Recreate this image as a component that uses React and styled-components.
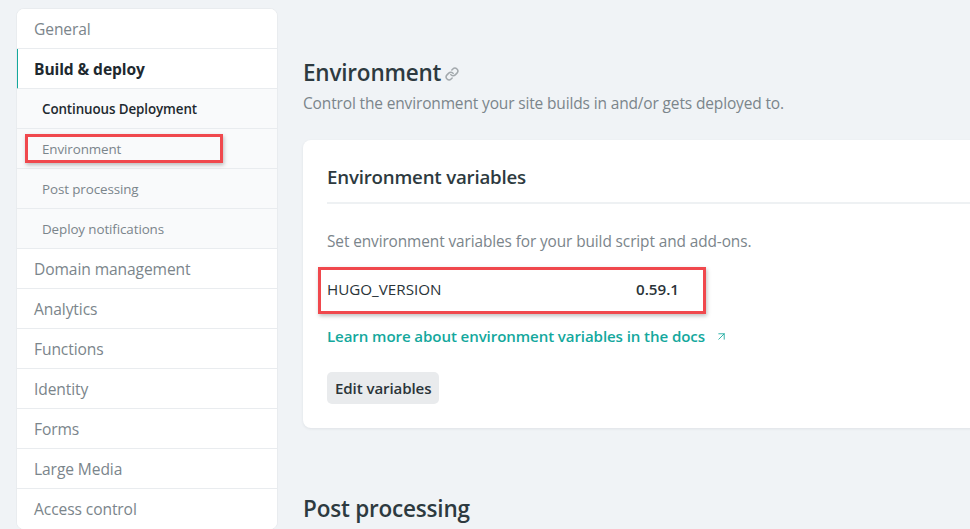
import React from 'react'
import styled, { createGlobalStyle } from 'styled-components'
import { Link as LinkIcon, ArrowUpRight } from 'lucide-react'

const colors = {
  page: '#f0f3f6',
  border: '#e9ecef',
  text: '#2d3a40',
  muted: '#7b858b',
  teal: '#14a89d',
  red: '#f0484d',
}

const GlobalStyle = createGlobalStyle`
  body {
    margin: 0;
    background: ${colors.page};
    font-family: "Open Sans", "Noto Sans", sans-serif;
    color: ${colors.text};
    overflow: hidden;
  }
`

const Page = styled.div`
  display: flex;
  gap: 25px;
  padding: 8px 0 0 16px;
  height: 529px;
  box-sizing: border-box;
`

const Sidebar = styled.nav`
  width: 262px;
  flex: none;
  align-self: flex-start;
  background: #fff;
  border: 1px solid ${colors.border};
  border-radius: 8px;
  overflow: hidden;
  box-sizing: border-box;
`

const NavItem = styled.div`
  height: 40px;
  display: flex;
  align-items: center;
  box-sizing: border-box;
  border-bottom: ${(p) => (p.$last ? 'none' : `1px solid ${colors.border}`)};
  padding-left: ${(p) => (p.$sub ? '25px' : p.$active ? '16px' : '17px')};
  background: ${(p) => (p.$sub ? '#f9fafb' : '#fff')};
  border-left: ${(p) => (p.$active ? `2px solid ${colors.teal}` : 'none')};
  margin-left: ${(p) => (p.$active ? '-1px' : '0')};
  font-size: ${(p) => (p.$sub ? '13.4px' : '15.6px')};
  font-weight: ${(p) => (p.$active ? 700 : p.$strong ? 600 : 400)};
  color: ${(p) => (p.$active || p.$strong ? '#1e292f' : colors.muted)};
  letter-spacing: -0.1px;
`

const NavMark = styled.span`
  display: flex;
  align-items: center;
  width: 198px;
  height: 29px;
  margin-left: -17px;
  padding-left: 14px;
  box-sizing: border-box;
  border: 3px solid ${colors.red};
  box-shadow: 1px 2px 4px rgba(0, 0, 0, 0.25);
`

const Main = styled.main`
  flex: 1;
  min-width: 0;
  padding-top: 49px;
`

const Heading = styled.h2`
  margin: 0;
  display: flex;
  align-items: center;
  gap: 4px;
  font-size: 22.5px;
  line-height: 32px;
  font-weight: 600;
  color: ${colors.text};
  letter-spacing: -0.2px;
  svg {
    color: #a3a9ad;
    margin-top: 2px;
  }
`

const Lead = styled.p`
  margin: 3px 0 0;
  font-size: 15.5px;
  line-height: 22px;
  color: ${colors.muted};
  letter-spacing: -0.15px;
`

const Card = styled.section`
  margin-top: 26px;
  width: 720px;
  background: #fff;
  border-radius: 8px;
  box-shadow: 0 1px 3px rgba(30, 40, 50, 0.08);
  padding: 0 0 24px 24px;
`

const CardHeader = styled.div`
  padding: 24px 0 12px;
  border-bottom: 2px solid #eef1f3;
  font-size: 18.7px;
  line-height: 26px;
  font-weight: 600;
  letter-spacing: -0.2px;
`

const CardBody = styled.div`
  padding-top: 27px;
  display: flex;
  flex-direction: column;
  align-items: flex-start;
`

const Note = styled.p`
  margin: 0;
  font-size: 15.4px;
  line-height: 22px;
  color: ${colors.muted};
  letter-spacing: -0.1px;
`

const VarMark = styled.div`
  margin: 14px 0 0 -9px;
  width: 388px;
  height: 47px;
  box-sizing: border-box;
  border: 3px solid ${colors.red};
  box-shadow: 1px 2px 4px rgba(0, 0, 0, 0.25);
  padding: 8px 0 0 6px;
`

const VarRow = styled.div`
  display: grid;
  grid-template-columns: 309px auto;
  font-size: 15.2px;
  line-height: 22px;
  color: #2a3439;
`

const VarValue = styled.span`
  font-weight: 600;
`

const DocsLink = styled.a`
  margin-top: 11px;
  display: flex;
  align-items: center;
  gap: 10px;
  font-size: 15.1px;
  line-height: 22px;
  font-weight: 600;
  color: ${colors.teal};
  text-decoration: none;
  letter-spacing: -0.1px;
`

const Button = styled.button`
  margin-top: 25px;
  height: 32px;
  padding: 0 8px;
  border: none;
  border-radius: 5px;
  background: #e9ebed;
  font-family: inherit;
  font-size: 15.1px;
  font-weight: 600;
  color: #2a3439;
  letter-spacing: -0.1px;
`

const Section = styled.h2`
  margin: 65px 0 0;
  font-size: 22.5px;
  line-height: 32px;
  font-weight: 600;
  letter-spacing: -0.2px;
`

const menu = [
  { label: 'General' },
  { label: 'Build & deploy', active: true },
  { label: 'Continuous Deployment', sub: true, strong: true },
  { label: 'Environment', sub: true, marked: true },
  { label: 'Post processing', sub: true },
  { label: 'Deploy notifications', sub: true },
  { label: 'Domain management' },
  { label: 'Analytics' },
  { label: 'Functions' },
  { label: 'Identity' },
  { label: 'Forms' },
  { label: 'Large Media' },
  { label: 'Access control' },
]

const App = () => {
  return (
    <>
      <GlobalStyle />
      <Page>
        <Sidebar>
          {menu.map((m, i) => (
            <NavItem
              key={m.label}
              $sub={m.sub}
              $active={m.active}
              $strong={m.strong}
              $last={i === menu.length - 1}
            >
              {m.marked ? <NavMark>{m.label}</NavMark> : m.label}
            </NavItem>
          ))}
        </Sidebar>
        <Main>
          <Heading>
            Environment
            <LinkIcon size={14} strokeWidth={2.6} />
          </Heading>
          <Lead>Control the environment your site builds in and/or gets deployed to.</Lead>
          <Card>
            <CardHeader>Environment variables</CardHeader>
            <CardBody>
              <Note>Set environment variables for your build script and add-ons.</Note>
              <VarMark>
                <VarRow>
                  <span>HUGO_VERSION</span>
                  <VarValue>0.59.1</VarValue>
                </VarRow>
              </VarMark>
              <DocsLink href="#">
                Learn more about environment variables in the docs
                <ArrowUpRight size={13} strokeWidth={1.6} />
              </DocsLink>
              <Button>Edit variables</Button>
            </CardBody>
          </Card>
          <Section>Post processing</Section>
        </Main>
      </Page>
    </>
  )
}

export default App
